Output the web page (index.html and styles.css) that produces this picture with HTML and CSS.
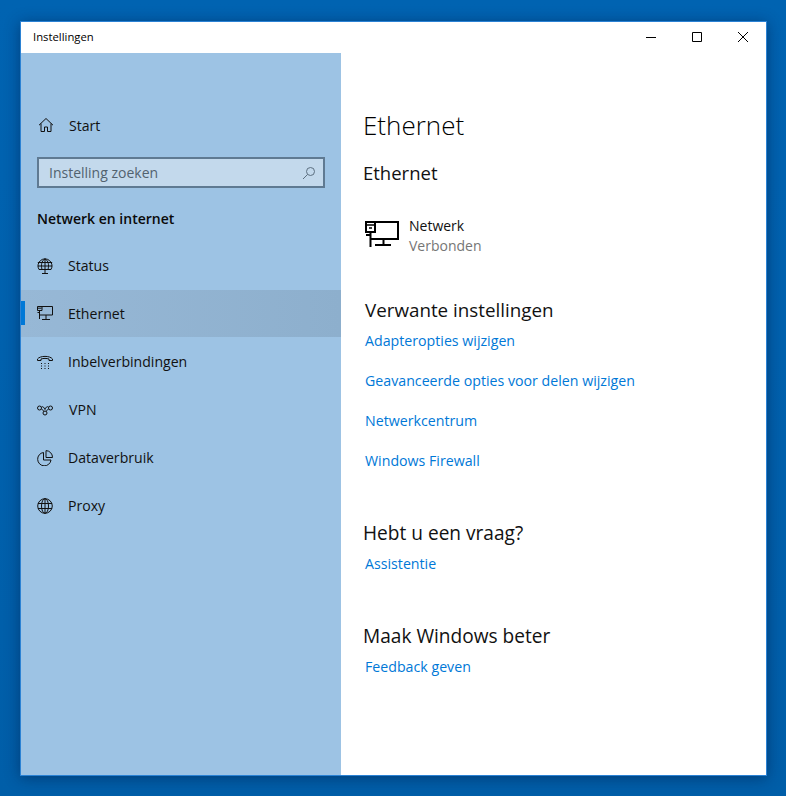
FILE: index.html
```html
<!DOCTYPE html>
<html lang="nl">
<head>
<meta charset="utf-8">
<title>Instellingen</title>
<link rel="stylesheet" href="styles.css">
</head>
<body>
<div class="window">
  <header class="titlebar">
    <span class="app-title">Instellingen</span>
    <div class="controls">
      <span class="control"><svg width="12" height="12" viewBox="0 0 12 12"><path d="M1 6.500h10" stroke="#000" fill="none"/></svg></span>
      <span class="control"><svg width="12" height="12" viewBox="0 0 12 12"><path d="M1.500 1.500h9v9h-9z" stroke="#000" fill="none"/></svg></span>
      <span class="control"><svg width="12" height="12" viewBox="0 0 12 12"><path d="M1 1l10 10M11 1L1 11" stroke="#000" fill="none"/></svg></span>
    </div>
  </header>
  <div class="body">
    <aside class="sidebar">
      <div class="home">
        <svg class="icon" width="16" height="16" viewBox="0 0 16 16"><path d="M1 8.200L8 1.500l7 6.700M3 6.500v8h3.500V10h3v4.500h3.500v-8" fill="none" stroke="#111"/></svg>
        <span>Start</span>
      </div>
      <div class="search">
        <span>Instelling zoeken</span>
        <svg width="14" height="14" viewBox="0 0 14 14"><circle cx="8.500" cy="5.500" r="4" fill="none" stroke="#5c6f80"/><path d="M5.500 8.500L1 13" stroke="#5c6f80" fill="none"/></svg>
      </div>
      <div class="section-title">Netwerk en internet</div>
      <nav class="nav">
        <a class="nav-item">
          <svg width="16" height="16" viewBox="0 0 16 16" fill="none" stroke="#111"><path d="M2 11.500A7 7 0 1 1 14 11.500zM8 .8v10.700M.8 4.500h14.400M.8 8h14.400M5 11.500C3.800 7 4.500 3 8 .8c3.500 2.200 4.200 6.200 3 10.700M8 11.500v3.500M5 15.500h6"/></svg>
          <span>Status</span>
        </a>
        <a class="nav-item active">
          <svg width="16" height="16" viewBox="0 0 16 16" fill="none" stroke="#111"><path d="M5 1.500h10.500v8.500H2.500M.5 1.500h4.500v4H.5zM2.500 5.500v8.500M.5 7.500h2M9 10v4M5 14.500h8M1 3.200h3.500"/></svg>
          <span>Ethernet</span>
        </a>
        <a class="nav-item">
          <svg width="16" height="16" viewBox="0 0 16 16" fill="none" stroke="#111"><path d="M.5 6.500V5C3 1.500 13 1.500 15.500 5v1.500h-3.500V5c-2-.8-6-.8-8 0v1.500z"/><path d="M4 9.500h1M7.500 9.500h1M11 9.500h1M4 12h1M7.500 12h1M11 12h1M4 14.500h1M7.500 14.500h1M11 14.500h1"/></svg>
          <span>Inbelverbindingen</span>
        </a>
        <a class="nav-item">
          <svg width="16" height="16" viewBox="0 0 16 16" fill="none" stroke="#111"><circle cx="2.500" cy="6" r="2"/><circle cx="13.500" cy="6" r="2"/><circle cx="8" cy="11" r="2"/><path d="M4.500 5C6 4 7 5.500 8 7.500M11.500 5C10 4 8.500 5.500 8 7.500M4.500 7C5.500 8.500 6.500 8 7 9.500M11.500 7C10.500 8.500 9.500 8 9 9.500"/></svg>
          <span class="vpn">VPN</span>
        </a>
        <a class="nav-item">
          <svg width="16" height="16" viewBox="0 0 16 16" fill="none" stroke="#111"><path d="M6.500 2.500a6.700 6.700 0 1 0 7.500 7.500H6.500zM9 .6a6.700 6.700 0 0 1 6.500 6.900H9z"/></svg>
          <span>Dataverbruik</span>
        </a>
        <a class="nav-item">
          <svg width="16" height="16" viewBox="0 0 16 16" fill="none" stroke="#111"><circle cx="8" cy="8" r="7.300"/><ellipse cx="8" cy="8" rx="3.500" ry="7.300"/><path d="M8 .7v14.600M1 5.500h14M1 10.500h14"/></svg>
          <span>Proxy</span>
        </a>
      </nav>
    </aside>
    <main class="content">
      <h1 class="page-title">Ethernet</h1>
      <h2 class="heading first">Ethernet</h2>
      <div class="network">
        <svg width="34" height="28" viewBox="0 0 34 28" fill="none" stroke="#000" stroke-width="2"><path d="M10 2h23v17H6M1 2h9v10H1zM5.500 12v15M1 15h4.500M18.500 19v6M10 25h16"/><path d="M2 5h7M4 8h3" stroke-width="1.500"/></svg>
        <div class="network-text">
          <div class="network-name">Netwerk</div>
          <div class="network-state">Verbonden</div>
        </div>
      </div>
      <h2 class="heading related">Verwante instellingen</h2>
      <div class="links">
        <a class="link">Adapteropties wijzigen</a>
        <a class="link">Geavanceerde opties voor delen wijzigen</a>
        <a class="link">Netwerkcentrum</a>
        <a class="link">Windows Firewall</a>
      </div>
      <h2 class="heading question">Hebt u een vraag?</h2>
      <a class="link single">Assistentie</a>
      <h2 class="heading better">Maak Windows beter</h2>
      <a class="link single">Feedback geven</a>
    </main>
  </div>
</div>
</body>
</html>
```

FILE: styles.css
```css
* { box-sizing: border-box; }
html, body { height: 100%; }
body {
  margin: 0;
  padding: 21px 19px 20px 20px;
  height: 796px;
  overflow: hidden;
  background: linear-gradient(180deg, #0063b1 0%, #005ea8 100%);
  font-family: "Open Sans", "Noto Sans", sans-serif;
  color: #111;
}
.window {
  width: 747px;
  height: 755px;
  border: 1px solid #2b82d4;
  background: #fff;
  display: flex;
  flex-direction: column;
  box-shadow: 0 2px 14px rgba(0, 20, 60, .45);
}
.titlebar {
  height: 31px;
  flex: none;
  display: flex;
  align-items: center;
  justify-content: space-between;
  padding-left: 12px;
  padding-bottom: 2px;
}
.app-title { font-size: 11.300px; color: #000; }
.controls { display: flex; height: 100%; }
.control { width: 46px; display: flex; align-items: center; justify-content: center; }
.body { flex: 1; display: flex; min-height: 0; }
.sidebar {
  width: 320px;
  flex: none;
  background: #9dc3e4;
  padding-top: 56px;
  font-size: 14.100px;
}
.home {
  height: 32px;
  display: flex;
  align-items: center;
  gap: 15px;
  padding-left: 17px;
  color: #111;
}
.search {
  height: 31px;
  margin: 16px 16px 0;
  border: 2px solid #5f7a92;
  background: #c3d9ec;
  display: flex;
  align-items: center;
  justify-content: space-between;
  padding: 0 7px 0 10px;
  color: #52626f;
  font-size: 14px;
}
.section-title {
  margin: 19px 16px 0;
  height: 24px;
  line-height: 24px;
  font-size: 14px;
  font-weight: 600;
  color: #0a0a0a;
}
.nav { margin-top: 11px; display: flex; flex-direction: column; }
.nav-item {
  height: 48px;
  display: flex;
  align-items: center;
  gap: 15px;
  padding-left: 16px;
  padding-bottom: 1px;
  position: relative;
}
.nav-item.active { background: linear-gradient(90deg, #97b8d6, #8dafcd); height: 47px; margin-bottom: 1px; }
.nav-item.active::before {
  content: "";
  position: absolute;
  left: 0;
  top: 11px;
  width: 4px;
  height: 24px;
  background: #0078d7;
}
.vpn { margin-left: 1px; }
.content { flex: 1; padding: 54px 0 0 22px; }
.page-title {
  margin: 0;
  font-size: 26px;
  font-weight: 300;
  line-height: 36px;
  color: #000;
}
.heading {
  margin: 0;
  font-size: 18.800px;
  font-weight: 400;
  line-height: 26px;
  color: #111;
}
.heading.first { margin-top: 17px; font-size: 18.500px; }
.network {
  display: flex;
  gap: 10px;
  margin: 30px 0 0 2px;
  align-items: flex-start;
}
.network svg { margin-top: 4px; }
.network-text { font-size: 14px; line-height: 20px; }
.network-name { color: #111; }
.network-state { color: #767676; }
.heading.related { margin: 41px 0 0 2px; }
.links { display: flex; flex-direction: column; gap: 20px; margin: 8px 0 0 2px; }
.link { display: block; font-size: 14.200px; line-height: 20px; color: #0078d7; }
.link.single { margin: 8px 0 0 2px; }
.heading.question { margin-top: 49px; font-size: 19.100px; }
.heading.better { margin-top: 49px; font-size: 19.100px; }
```
